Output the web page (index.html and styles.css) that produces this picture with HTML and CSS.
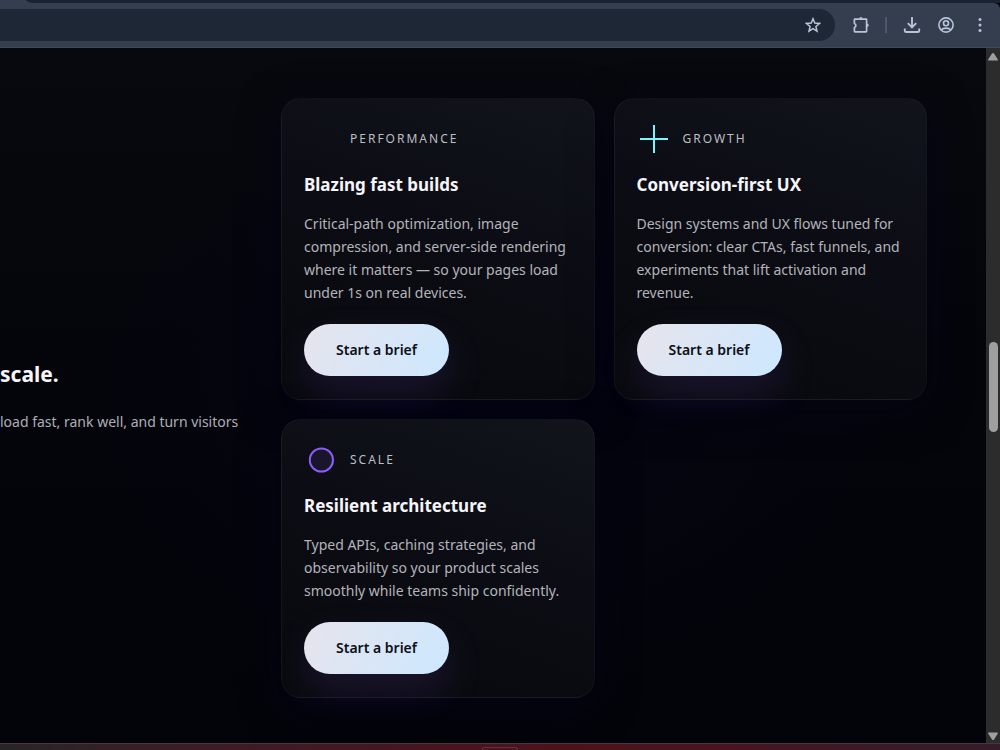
FILE: index.html
```html
<!DOCTYPE html>
<html lang="en">
<head>
    <meta charset="UTF-8">
    <meta name="viewport" content="width=device-width, initial-scale=1.0">
    <title>Start a brief</title>
    <link rel="stylesheet" href="styles.css">
</head>
<body>
    <header class="browser">
        <div class="tab-strip"><span class="tab"></span></div>
        <div class="toolbar">
            <div class="address">
                <button class="tool" aria-label="Bookmark">
                    <svg width="16" height="16" viewBox="0 0 16 16" fill="none" stroke="currentColor" stroke-width="1.5"><path d="M8 1.8l1.8 4.3 4.7.4-3.6 3 1.1 4.6L8 11.6l-4 2.5 1.1-4.6-3.6-3 4.7-.4z"/></svg>
                </button>
            </div>
            <button class="tool" aria-label="Extensions">
                <svg width="18" height="18" viewBox="0 0 18 18" fill="none" stroke="currentColor" stroke-width="1.7" stroke-linejoin="round"><path d="M3 3.200h11q.6 0 .6.6v11.400q0 .6-.6.6H3q-.6 0-.6-.6v-3.700a2.100 2.100 0 0 0 0-4V3.800q0-.6.6-.6z"/><path d="M7.200 2.800a1.700 1.700 0 0 1 3.400 0zM15 7.600a1.700 1.700 0 0 1 0 3.400z" fill="currentColor" stroke="none"/></svg>
            </button>
            <span class="divider"></span>
            <button class="tool" aria-label="Downloads">
                <svg width="18" height="18" viewBox="0 0 18 18" fill="none" stroke="currentColor" stroke-width="1.9"><path d="M9 1v10M4.800 7.200L9 11.400l4.200-4.200M1.800 12.500v2.200q0 1.300 1.300 1.300h11.800q1.300 0 1.300-1.300v-2.200"/></svg>
            </button>
            <button class="tool" aria-label="Profile">
                <svg width="18" height="18" viewBox="0 0 18 18" fill="none" stroke="currentColor" stroke-width="1.6"><circle cx="9" cy="9" r="7.1"/><circle cx="9" cy="7.2" r="2.5"/><path d="M3.9 14c2.6-2.5 7.6-2.5 10.2 0"/></svg>
            </button>
            <button class="tool" aria-label="Menu">
                <svg width="18" height="18" viewBox="0 0 18 18" fill="currentColor"><circle cx="9" cy="3.6" r="1.5"/><circle cx="9" cy="9" r="1.5"/><circle cx="9" cy="14.4" r="1.5"/></svg>
            </button>
        </div>
    </header>

    <div class="viewport">
        <main class="page">
            <section class="intro">
                <h2>scale.</h2>
                <p>load fast, rank well, and turn visitors</p>
            </section>

            <section class="cards">
                <article class="card">
                    <div class="card-head">
                        <span class="icon"></span>
                        <span class="label">PERFORMANCE</span>
                    </div>
                    <h3>Blazing fast builds</h3>
                    <p>Critical-path optimization, image compression, and server-side rendering where it matters — so your pages load under 1s on real devices.</p>
                    <a class="button" href="#brief">Start a brief</a>
                </article>

                <article class="card">
                    <div class="card-head">
                        <svg class="icon" viewBox="0 0 34 34" stroke="#7df3fb" stroke-width="2"><path d="M17 3v28M3 17h28"/></svg>
                        <span class="label">GROWTH</span>
                    </div>
                    <h3>Conversion-first UX</h3>
                    <p>Design systems and UX flows tuned for conversion: clear CTAs, fast funnels, and experiments that lift activation and revenue.</p>
                    <a class="button" href="#brief">Start a brief</a>
                </article>

                <article class="card">
                    <div class="card-head">
                        <svg class="icon" viewBox="0 0 34 34" stroke="#8b5cf6" stroke-width="2"><circle cx="17.4" cy="17" r="11.6" fill="#8b5cf6" fill-opacity=".1"/></svg>
                        <span class="label">SCALE</span>
                    </div>
                    <h3>Resilient architecture</h3>
                    <p>Typed APIs, caching strategies, and observability so your product scales smoothly while teams ship confidently.</p>
                    <a class="button" href="#brief">Start a brief</a>
                </article>
            </section>
        </main>

        <div class="scrollbar">
            <svg width="10" height="8" viewBox="0 0 10 8" fill="#9f9f9f"><path d="M5 0q.6 0 1 .6l3.7 5.6q.6 1.3-.7 1.3H1q-1.3 0-.7-1.3L4 .6Q4.4 0 5 0z"/></svg>
            <span class="track"><span class="thumb"></span></span>
            <svg width="10" height="8" viewBox="0 0 10 8" fill="#9f9f9f"><path d="M5 8q.6 0 1-.6l3.7-5.6Q10.3.5 9 .5H1Q-.3.5.3 1.8L4 7.4Q4.4 8 5 8z"/></svg>
        </div>
    </div>

    <footer class="taskbar"><span class="task"></span></footer>
</body>
</html>
```
FILE: styles.css
```css
* {
    box-sizing: border-box;
}
body {
    display: flex;
    flex-direction: column;
    height: 100vh;
    margin: 0;
    overflow: hidden;
    background: #03040a;
    color: #f5f5fa;
    font-family: "Noto Sans", "Open Sans", sans-serif;
}
h2, h3, p {
    margin: 0;
}

/* Browser bar */
.tab-strip {
    height: 3px;
    background: #1a2232;
}
.tab {
    display: block;
    width: 32px;
    height: 3px;
    background: #353e4f;
    clip-path: polygon(0 0, 80% 0, 88% 66%, 100% 100%, 0 100%);
}
.toolbar {
    display: flex;
    align-items: center;
    height: 45px;
    padding-right: 11px;
    background: #353e4f;
    border-bottom: 1px solid #414957;
    border-top-right-radius: 6px;
}
.address {
    display: flex;
    flex: 1;
    align-items: center;
    justify-content: flex-end;
    height: 32px;
    margin-right: 17px;
    padding-right: 14px;
    background: #1e2736;
    border-radius: 0 16px 16px 0;
}
.tool {
    display: flex;
    padding: 0;
    border: 0;
    background: none;
    color: #b8c4d8;
}
.divider {
    width: 2px;
    height: 16px;
    margin: 0 16px 0 15px;
    background: #4b576b;
}
.tool + .tool {
    margin-left: 16px;
}

/* Page */
.viewport {
    display: flex;
    flex: 1;
    min-height: 0;
}
.page {
    display: flex;
    flex: 1;
    align-items: center;
    padding: 4px 59px 0 0;
    background:
        radial-gradient(ellipse at 50% 50%, rgba(3, 4, 18, 0.7), transparent 60%),
        linear-gradient(180deg, #08080f 0%, #04050b 45%, #03040a 100%);
}
.intro {
    flex: 0 0 281px;
    white-space: nowrap;
}
.intro h2 {
    margin-bottom: 20px;
    font-size: 21px;
    line-height: 28px;
}
.intro p {
    color: #aeafb5;
    font-size: 14px;
    line-height: 28px;
}
.cards {
    display: grid;
    flex: 1;
    grid-template-columns: 1fr 1fr;
    align-items: start;
    gap: 19px;
}
.card {
    padding: 23px 22px;
    border: 1px solid rgba(255, 255, 255, 0.04);
    border-radius: 20px;
    background: linear-gradient(200deg, #11141b 0%, #0c0d14 45%, #08090d 100%);
    box-shadow: 0 10px 40px rgba(4, 4, 22, 0.5);
}
.card-head {
    display: flex;
    align-items: center;
    gap: 12px;
    margin-bottom: 16px;
}
.icon {
    width: 34px;
    height: 34px;
    fill: none;
}
.label {
    color: #bdbec4;
    font-size: 12px;
    letter-spacing: 2px;
    line-height: 18px;
}
.card h3 {
    margin-bottom: 14px;
    font-size: 17px;
    line-height: 26px;
}
.card p {
    margin-bottom: 20px;
    color: #b3b4ba;
    font-size: 14px;
    line-height: 23px;
}
.button {
    display: inline-block;
    padding: 14px 32px;
    border-radius: 26px;
    background: linear-gradient(120deg, #e6e4ec, #cde8ff);
    box-shadow: 0 18px 40px rgba(139, 92, 246, 0.14);
    color: #0c0f18;
    font-size: 14px;
    font-weight: 600;
    line-height: 24px;
    text-decoration: none;
    vertical-align: top;
}

/* Scrollbar */
.scrollbar {
    display: flex;
    flex-direction: column;
    align-items: center;
    width: 14px;
    padding: 5px 0 3px;
    background: #2c2c2c;
}
.track {
    flex: 1;
    display: flex;
    flex-direction: column;
}
.track::before {
    content: "";
    flex: 281;
}
.track::after {
    content: "";
    flex: 300;
}
.thumb {
    flex: 91;
    width: 9px;
    border-radius: 5px;
    background: #9f9f9f;
}

.taskbar {
    display: flex;
    justify-content: center;
    align-items: flex-end;
    height: 7px;
    border-top: 1px solid #463640;
    background: linear-gradient(90deg, #282526 0%, #3c1d25 20%, #4c121c 55%, #4a131d 70%, #391a26 88%, #331c29 100%);
}
.task {
    width: 36px;
    height: 3px;
    border: 1px solid #60333a;
    border-bottom: 0;
    border-radius: 4px 4px 0 0;
}
```
